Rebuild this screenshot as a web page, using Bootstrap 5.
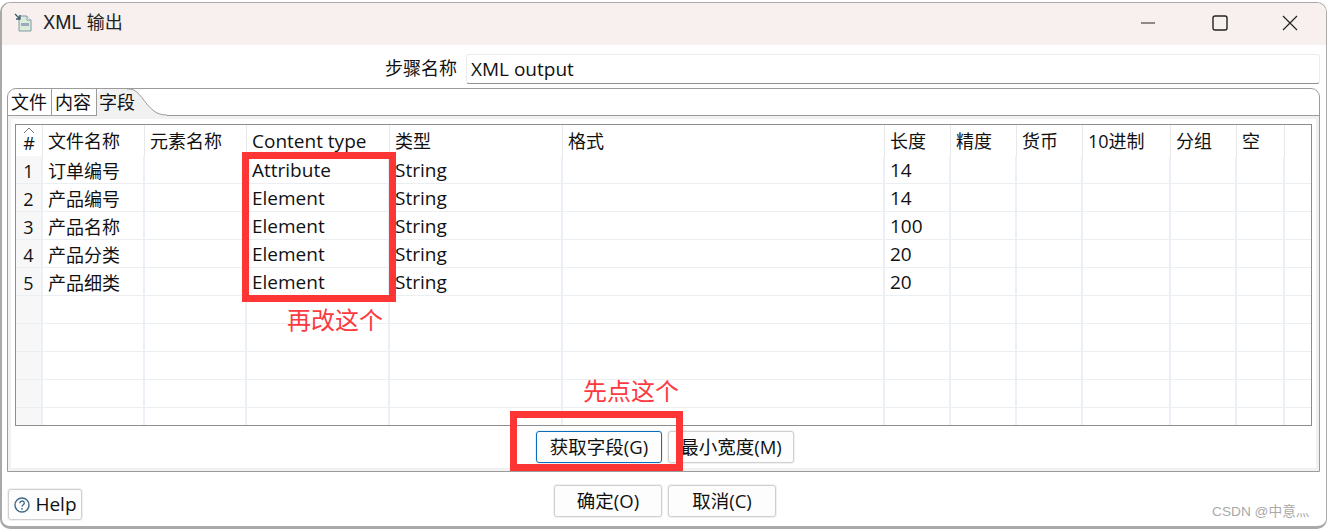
<!DOCTYPE html>
<html lang="zh"><head><meta charset="utf-8">
<link href="https://cdn.jsdelivr.net/npm/bootstrap@5.3.0/dist/css/bootstrap.min.css" rel="stylesheet">
<style>
html,body{margin:0;height:529px;overflow:hidden;background:#fff}
body{font-family:"Open Sans","Noto Sans CJK SC",sans-serif;font-size:19px;color:#111;line-height:1.2}
.zh{font-size:18px}
.win{position:relative;height:529px;width:1327px;padding:2px 0 0 0}
.frame{height:527px;width:1327px;border:solid #a9a9a9;border-width:1px 1px 3px 2px;border-radius:10px;overflow:hidden;background:#fff;display:flex;flex-direction:column}
.tbar{height:42px;background:#f7f0ee;padding:0 0 3px 12px;flex:none}
.tbar .ttl{margin-left:9px;font-size:18px;color:#222;font-family:"Inter","Noto Sans CJK SC",sans-serif}
.wctrls{margin-left:auto;gap:54px;padding-right:28px}
.minico{margin-right:2px}
.stepline{height:43px;padding:9px 6px 0 0;flex:none}
.steplbl{width:136px;text-align:right;padding-top:4px;margin-left:319px;margin-right:9px;font-size:18px}
.stepinp{flex:1;height:30px;border:1px solid #ececec;border-bottom-color:#8f8f8f;border-radius:3px;padding:3px 4px 0;font-size:19px}
.folder{position:relative;margin:0 6px 0 5px;height:384px;border:1px solid #9b9b9b;border-radius:9px 9px 0 0;flex:none}
.tabbar{height:27px;display:flex;position:relative}
.tabbar::after{content:"";position:absolute;left:157px;right:0;bottom:0;border-bottom:1px solid #9b9b9b}
.tabi{height:27px;padding:1px 3px 0 3px;border-right:1px solid #9b9b9b;white-space:nowrap;font-size:18px;line-height:24px;border-radius:8px 0 0 0}
.tabi.tab1{width:44px;border-bottom:1px solid #9b9b9b}
.tabi.tab2{width:45px;border-bottom:1px solid #9b9b9b}
.tabi.tab3{background:#f1f1f1;border:0;width:70px;position:relative;padding-left:2px;border-radius:7px 0 0 0;z-index:1}
.tabi svg{position:absolute;right:0;top:0;z-index:-1}
.fbody{border:3px solid #f1f1f1;height:355px;padding:5px 4px 0 4px}
.gridbox{border:1px solid #8d8d8d;height:302px;overflow:hidden}
.xtbl{table-layout:fixed;border-collapse:separate;border-spacing:0;width:1296px}
.xtbl td,.xtbl th{font-weight:400;padding:2px 0 0 5px;height:28px;border-right:2px solid #ebf0f7;border-bottom:1px solid #ebeff4;white-space:nowrap;vertical-align:middle;font-size:19px;line-height:1}
.xtbl th{height:31px;border-bottom:0;border-right:1px solid #e8e8e8;padding-top:1px}
.xtbl .zh{font-size:18px;padding-left:5px}
.xtbl td:first-child{background:#f7f7f7;padding:2px 0 0;text-align:center;font-size:18px}
.xtbl th:first-child{padding:4px 0 0;text-align:center;position:relative;font-size:18px}
.xtbl td:last-child,.xtbl th:last-child{border-right:0}
.caretmk{position:absolute;left:7px;top:2px}
.midbtn{gap:6px;padding:5px 0 0 521px}
.uibtn{height:32px;background:#fdfdfd;border:1px solid #d0d0d0;border-radius:3px;font-size:18.5px;padding:0;color:#111;display:flex;align-items:center;justify-content:center;line-height:1;box-shadow:0 0 0 1px #f1f1f1}
.uibtn.pri{border-color:#0b6fc0}
.bw126{width:126px}.bw108{width:108px}
.botline{position:relative;height:70px;flex:none;padding-top:13px}
.helpbtn{position:absolute;left:6px;top:17px;width:74px;height:31px;gap:5px;font-size:19px;padding-left:1px}
.okwrap{padding-left:552px;gap:6px}
.redbox{position:absolute;border:7px solid #fd3535;pointer-events:none}
.r1{left:242px;top:152px;width:154px;height:150px}
.r2{left:510px;top:411px;width:173px;height:60px}
.note{position:absolute;color:#fd3a3f;font-size:24px;line-height:1;font-family:"Noto Sans CJK SC",sans-serif}
.n1{left:287px;top:307px}.n2{left:583px;top:378px}
.wmk{position:absolute;left:1212px;top:504px;font-size:13.7px;color:#a9a9a9;font-family:"Liberation Sans","Noto Sans CJK SC",sans-serif;line-height:1.2}
</style></head><body>
<div class="win">
<div class="frame">
 <div class="tbar d-flex align-items-center">
  <svg width="20" height="20" viewBox="0 0 20 20"><path d="M5 3h8l4 4v11H5z" fill="#dcebdc" stroke="#7f9aa0"/><path d="M13 3v4h4" fill="#fff" stroke="#7f9aa0"/><path d="M1 1l5 5M6 2v4H2" fill="none" stroke="#3a5a66" stroke-width="1.3"/><rect x="7" y="10" width="8" height="3" fill="#9ab"/></svg>
  <span class="ttl">XML 输出</span>
  <div class="wctrls d-flex align-items-center">
   <svg class="minico" width="16" height="16" viewBox="0 0 16 16"><path d="M1 8h14" stroke="#222" stroke-width="1.2"/></svg>
   <svg width="16" height="16" viewBox="0 0 16 16"><rect x="1" y="1" width="14" height="14" rx="2" fill="none" stroke="#222" stroke-width="1.4"/></svg>
   <svg width="16" height="16" viewBox="0 0 16 16"><path d="M1 1l14 14M15 1L1 15" stroke="#222" stroke-width="1.2"/></svg>
  </div>
 </div>
 <div class="stepline d-flex">
  <div class="steplbl">步骤名称</div>
  <div class="stepinp">XML output</div>
 </div>
 <div class="folder">
  <div class="tabbar">
   <div class="tabi tab1">文件</div>
   <div class="tabi tab2">内容</div>
   <div class="tabi tab3">字段<svg width="40" height="27" viewBox="0 0 40 27"><path d="M0 0H3C12 0 18 16 27 22C31 25 35 26 40 26V-1H0Z" fill="#fff"/><path d="M0 0H3C12 0 18 16 27 22C31 25 35 26 40 26" fill="none" stroke="#9b9b9b"/></svg></div>
  </div>
  <div class="fbody">
   <div class="gridbox">
    <table class="xtbl">
     <colgroup><col style="width:27px"><col style="width:102px"><col style="width:102px"><col style="width:143px"><col style="width:173px"><col style="width:322px"><col style="width:66px"><col style="width:66px"><col style="width:66px"><col style="width:88px"><col style="width:66px"><col style="width:48px"><col></colgroup>
     <tr><th>#<svg class="caretmk" width="12" height="6" viewBox="0 0 12 6"><path d="M1 6l5-5 5 5" fill="none" stroke="#777"/></svg></th><th class="zh">文件名称</th><th class="zh">元素名称</th><th>Content type</th><th class="zh">类型</th><th class="zh">格式</th><th class="zh">长度</th><th class="zh">精度</th><th class="zh">货币</th><th class="zh">10进制</th><th class="zh">分组</th><th class="zh">空</th><th></th></tr>
     <tr><td>1</td><td class="zh">订单编号</td><td></td><td>Attribute</td><td>String</td><td></td><td>14</td><td></td><td></td><td></td><td></td><td></td><td></td></tr>
     <tr><td>2</td><td class="zh">产品编号</td><td></td><td>Element</td><td>String</td><td></td><td>14</td><td></td><td></td><td></td><td></td><td></td><td></td></tr>
     <tr><td>3</td><td class="zh">产品名称</td><td></td><td>Element</td><td>String</td><td></td><td>100</td><td></td><td></td><td></td><td></td><td></td><td></td></tr>
     <tr><td>4</td><td class="zh">产品分类</td><td></td><td>Element</td><td>String</td><td></td><td>20</td><td></td><td></td><td></td><td></td><td></td><td></td></tr>
     <tr><td>5</td><td class="zh">产品细类</td><td></td><td>Element</td><td>String</td><td></td><td>20</td><td></td><td></td><td></td><td></td><td></td><td></td></tr>
     <tr><td></td><td></td><td></td><td></td><td></td><td></td><td></td><td></td><td></td><td></td><td></td><td></td><td></td></tr>
     <tr><td></td><td></td><td></td><td></td><td></td><td></td><td></td><td></td><td></td><td></td><td></td><td></td><td></td></tr>
     <tr><td></td><td></td><td></td><td></td><td></td><td></td><td></td><td></td><td></td><td></td><td></td><td></td><td></td></tr>
     <tr><td></td><td></td><td></td><td></td><td></td><td></td><td></td><td></td><td></td><td></td><td></td><td></td><td></td></tr>
     <tr><td></td><td></td><td></td><td></td><td></td><td></td><td></td><td></td><td></td><td></td><td></td><td></td><td></td></tr>
    </table>
   </div>
   <div class="midbtn d-flex">
    <button class="uibtn pri bw126" type="button">获取字段(G)</button>
    <button class="uibtn bw126" type="button">最小宽度(M)</button>
   </div>
  </div>
 </div>
 <div class="botline d-flex">
  <button class="uibtn helpbtn" type="button"><svg width="16" height="16" viewBox="0 0 16 16"><circle cx="8" cy="8" r="7" fill="none" stroke="#3f6a8a" stroke-width="1.4"/><path d="M5.800 6.300c0-3 4.500-3 4.500-.2 0 1.700-2.300 1.800-2.300 3.700" fill="none" stroke="#3f6a8a" stroke-width="1.3"/><circle cx="8" cy="11.800" r=".9" fill="#3f6a8a"/></svg>Help</button>
  <div class="okwrap d-flex">
   <button class="uibtn bw108" type="button">确定(O)</button>
   <button class="uibtn bw108" type="button">取消(C)</button>
  </div>
 </div>
</div>
<div class="redbox r1"></div><div class="redbox r2"></div>
<div class="note n1">再改这个</div><div class="note n2">先点这个</div>
<div class="wmk">CSDN @中意灬</div>
</div>
<script src="https://cdn.jsdelivr.net/npm/bootstrap@5.3.0/dist/js/bootstrap.bundle.min.js"></script>
</body></html>
